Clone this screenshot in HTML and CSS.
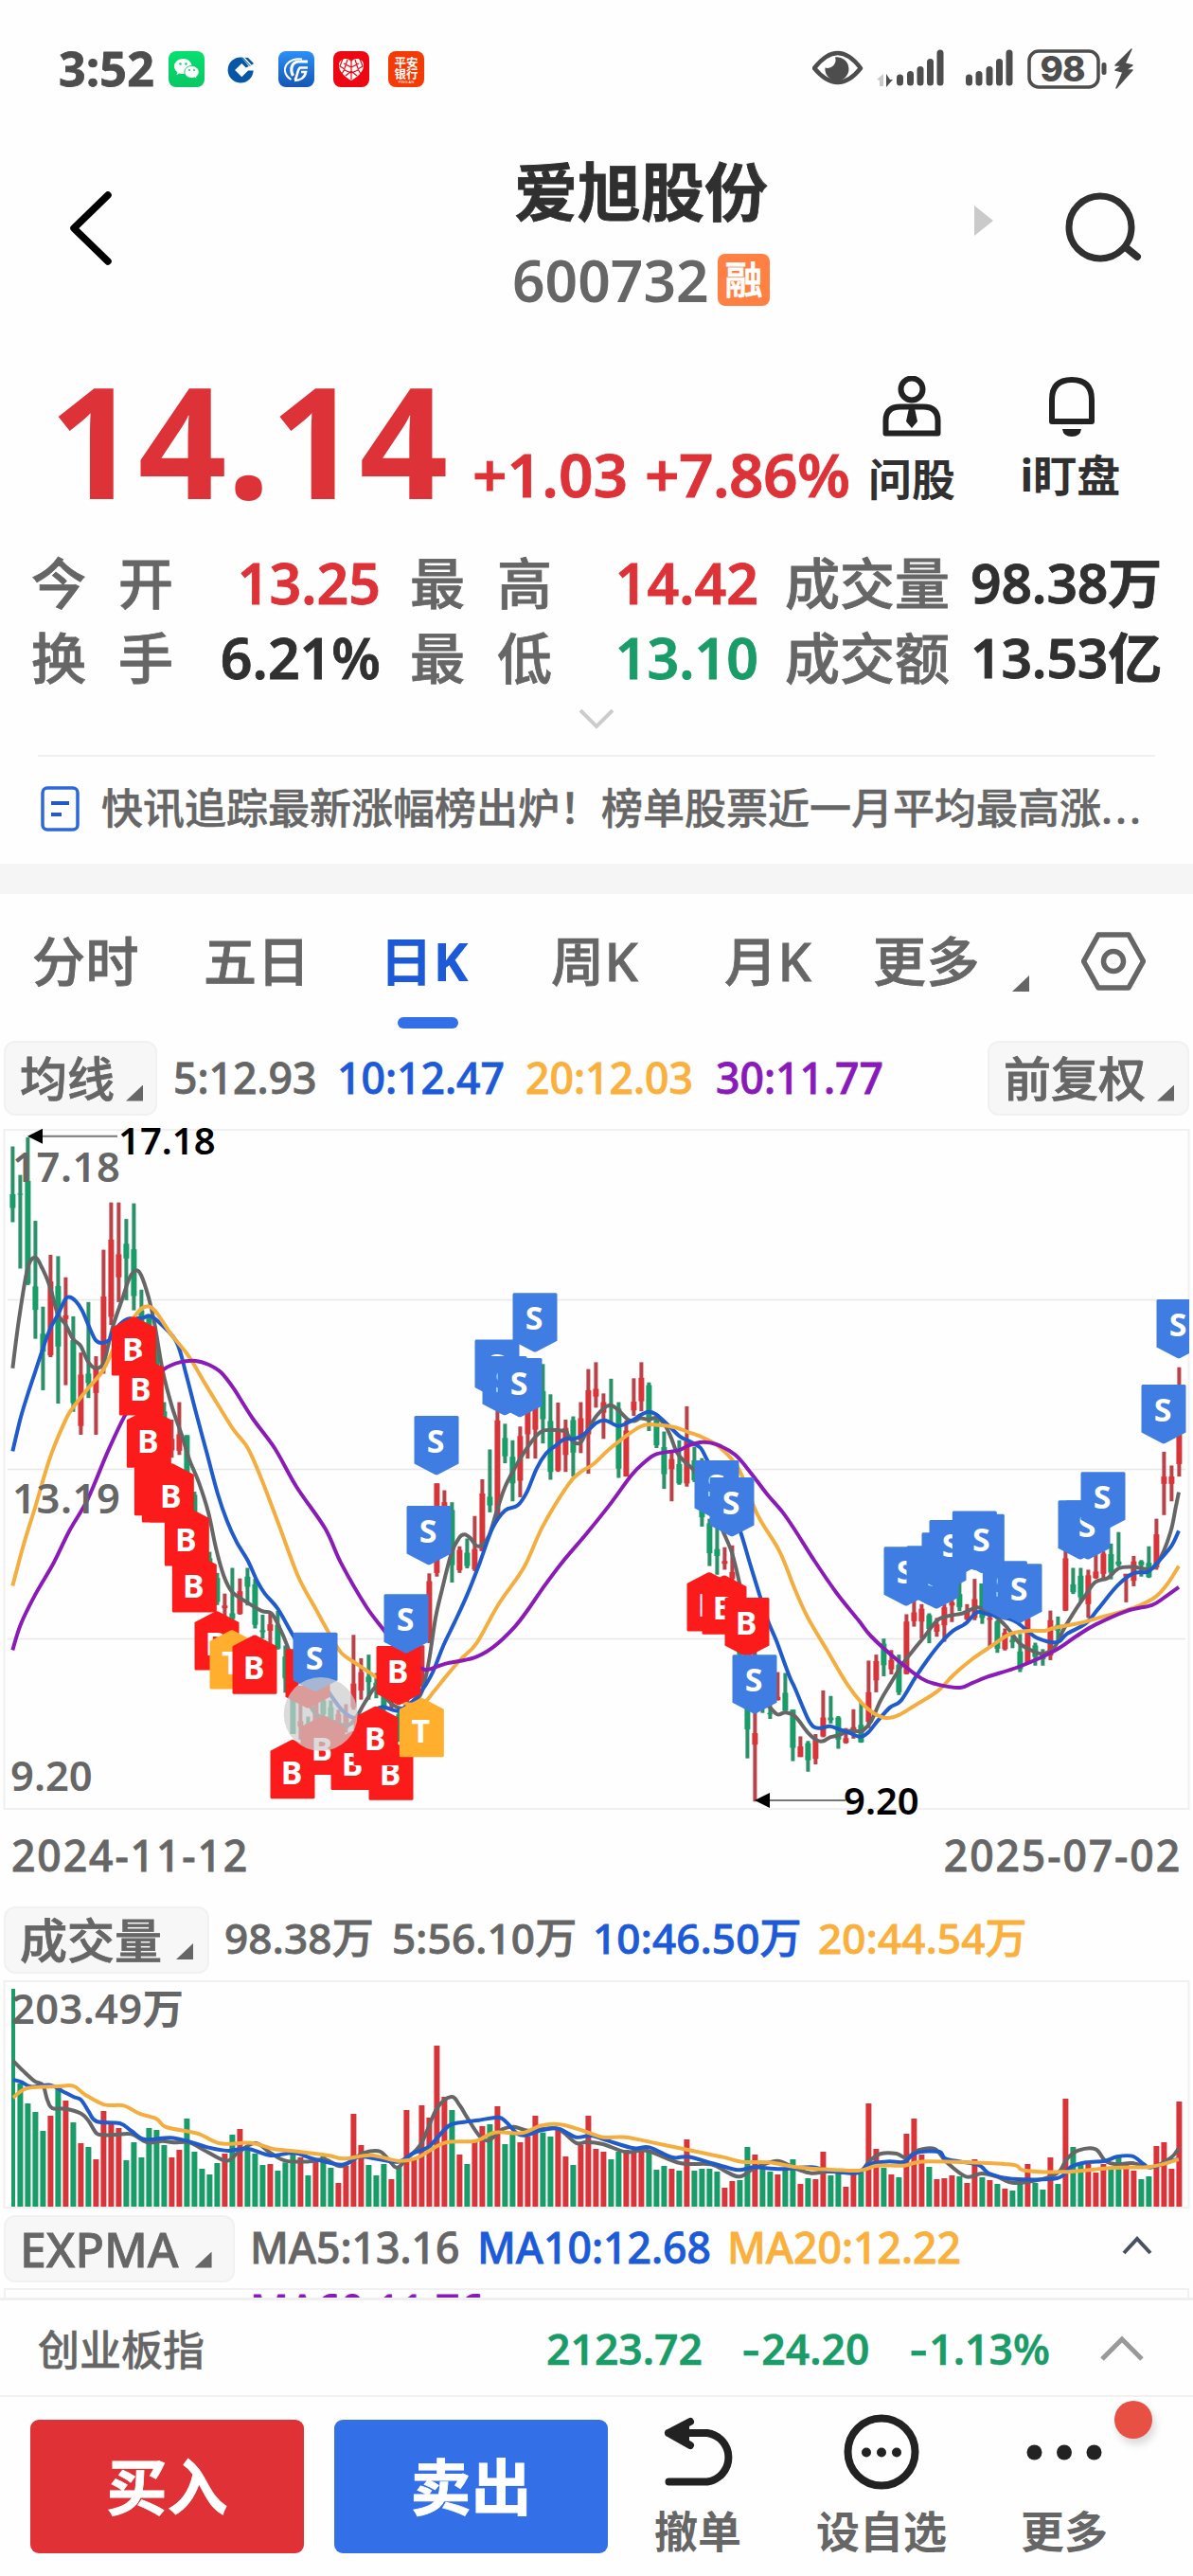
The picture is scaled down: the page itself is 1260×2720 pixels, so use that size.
FILE: index.html
```html
<!DOCTYPE html>
<html lang="zh-CN">
<head>
<meta charset="utf-8">
<title>爱旭股份 600732</title>
<link rel="stylesheet" href="styles.css">
</head>
<body>
<div class="phone">
  <div class="status">
    <span class="clock">3:52</span>
    <div class="apps">
      <svg viewBox="0 0 38 38"><defs><linearGradient id="wx" x1="0" y1="0" x2="0" y2="1"><stop offset="0" stop-color="#06e071"/><stop offset="1" stop-color="#0ac763"/></linearGradient></defs><rect width="38" height="38" rx="8" fill="url(#wx)"/><path d="M15.500 8c-5 0-9.500 3.400-9.500 8 0 2.600 1.300 4.700 3.400 6.200l-.9 2.800 3.300-1.600c1.200.4 2.500.5 3.700.5 5 0 9-3.400 9-7.900s-4-8-9-8z" fill="#fff"/><path d="M24.500 15.500c-4.200 0-7.600 2.900-7.600 6.500s3.400 6.500 7.600 6.500c1 0 2-.2 2.900-.5l2.800 1.500-.8-2.400c1.700-1.200 2.800-3 2.800-5.100 0-3.600-3.500-6.500-7.700-6.500z" fill="#fff" stroke="#0acf67"/><g fill="#0ccc66"><circle cx="12.500" cy="13.500" r="1.200"/><circle cx="18.500" cy="13.500" r="1.200"/><circle cx="22" cy="20" r="1"/><circle cx="27" cy="20" r="1"/></g></svg>
      <svg viewBox="0 0 38 38"><path d="M19 6.500a13.500 13.500 0 1 0 12.600 14h-5.500l-6.800 6.800-7.200-7.200 7.200-7.200 4.500 4.500 3-1.500z" fill="#0757a6"/><path d="M19 6.500l9 9.500 4-3-6-6z" fill="#0757a6"/><path d="M20 5l10 11" stroke="#fff" stroke-width="1.300"/></svg>
      <svg viewBox="0 0 38 38"><defs><linearGradient id="gf" x1="0" y1="0" x2="0" y2="1"><stop offset="0" stop-color="#2d8ff8"/><stop offset="1" stop-color="#1557b4"/></linearGradient></defs><rect width="38" height="38" rx="8" fill="url(#gf)"/><g fill="none" stroke="#fff"><path d="M25 8.500C14 6.500 6 14 7 21c.5 4 3 7 6.500 9" stroke-width="2"/><path d="M31 11H21c-7 1-9 8-5.500 15" stroke-width="3.200"/><path d="M31 17.500h-8c-3 1-2 7-5.500 13M17 31c6 0 11-3 12-9h-5" stroke-width="2.600"/></g></svg>
      <svg viewBox="0 0 38 38"><rect width="38" height="38" rx="8" fill="#ec0712"/><path d="M19 31C12 27 5.500 21.500 6 14c.5-6 9-8.500 13-3 4-5.500 12.500-3 13 3 .5 7.500-6 13-13 17z" fill="#fff"/><path d="M19 10v20M10 8l-3 8 5 3-3 5M28 8l3 8-5 3 3 5M11 13l8 4 8-4M12 20l7 3 7-3M15 9l-3 9M23 9l3 9M13 26l6-5 6 5" stroke="#ec0712" stroke-width="1.200" fill="none"/></svg>
      <svg viewBox="0 0 38 38"><rect width="38" height="38" rx="8" fill="#f43a05"/><text class="pab" x="19" y="17">平安</text><text class="pab" x="19" y="29">银行</text><text class="pab-en" x="19" y="34">PING AN</text></svg>
    </div>
    <div class="signals">
      <svg width="362" height="46" viewBox="0 0 362 46"><path d="M3 24Q28-8 52 24Q28 54 3 24Z" fill="none" stroke="#4d4d4d" stroke-width="4.500" transform="translate(-1 -2)" stroke-linejoin="round"/><path d="M24 10.500a8.500 8.500 0 0 1-10.500 11 12.500 12.500 0 1 0 10.500-11z" fill="#4d4d4d"/><path d="M68 34l7-6v13h-4v-6z" fill="#c9c9c9"/><path d="M78 28l4 6h3l-7 8z" fill="#4d4d4d"/><g stroke="#4d4d4d" stroke-width="7" stroke-linecap="round"><path d="M92.500 32v5M103.500 28.500v8.500M114 23.500v13.500M124.500 15.500v21.500M135 6v31M165.500 32v5M176 28.500v8.500M187 23.500v13.500M197.500 15.500v21.500M208 6v31"/></g><rect x="229" y="4" width="73" height="38" rx="10" fill="none" stroke="#4d4d4d" stroke-width="3.500"/><text class="battery" x="264" y="36">98</text><rect x="305.500" y="16" width="5" height="13" rx="2.500" fill="#4d4d4d"/><path d="M337 2l-17 17h7l-7 5 8 2-7 17 17-19h-7l7-5-8-2z" fill="#4d4d4d" stroke="#4d4d4d" stroke-width="1.500" stroke-linejoin="round"/></svg>
    </div>
  </div>

  <header class="header">
    <svg class="back" width="52" height="84" viewBox="0 0 52 84"><path d="M44 7L8 42l36 35" fill="none" stroke="#000" stroke-width="7.500" stroke-linecap="round" stroke-linejoin="round"/></svg>
    <div class="stock"><h1>爱旭股份</h1><div class="code"><span>600732</span><b>融</b></div></div>
    <svg class="next" width="20" height="32" viewBox="0 0 20 32"><path d="M0 0l20 16L0 32z" fill="#cacaca"/></svg>
    <svg class="search" width="84" height="80" viewBox="0 0 84 80"><circle cx="37" cy="39" r="33" fill="none" stroke="#303030" stroke-width="7"/><path d="M65 61l11 9" stroke="#303030" stroke-width="8" stroke-linecap="round"/></svg>
  </header>

  <section class="quote">
    <div class="prices"><strong>14.14</strong><span class="chg">+1.03</span><span class="pct">+7.86%</span></div>
    <div class="quick q1"><svg width="64" height="64" viewBox="0 0 64 64"><g fill="none" stroke="#222" stroke-width="6"><circle cx="32" cy="14" r="11.500"/><path d="M4.500 60.500V47Q4.500 32.500 20 32.500h24Q59.500 32.500 59.500 47V60.500z" stroke-linejoin="round"/></g><path d="M29 34h6l3 14-6 7-6-7z" fill="#222"/></svg><span>问股</span></div>
    <div class="quick q2"><svg width="64" height="64" viewBox="0 0 64 64"><path d="M11 48V25Q11 4 32 4t21 21v23z" fill="none" stroke="#222" stroke-width="6" stroke-linejoin="round"/><path d="M22 56h20q-1 8-10 8t-10-8z" fill="#222"/></svg><span>i盯盘</span></div>
  </section>

  <section class="stats">
    <span class="k"><i>今</i><i>开</i></span><span class="v red">13.25</span><span class="k"><i>最</i><i>高</i></span><span class="v red">14.42</span><span class="k full">成交量</span><span class="v amt">98.38万</span>
    <span class="k"><i>换</i><i>手</i></span><span class="v">6.21%</span><span class="k"><i>最</i><i>低</i></span><span class="v green">13.10</span><span class="k full">成交额</span><span class="v amt">13.53亿</span>
  </section>
  <div class="expand"><svg width="38" height="22" viewBox="0 0 38 22"><path d="M2 1l17 17L36 1" fill="none" stroke="#ccc" stroke-width="4"/></svg></div>
  <div class="news"><svg width="42" height="48" viewBox="0 0 42 48"><rect x="2" y="2" width="37" height="44" rx="5" fill="none" stroke="#2c68d8" stroke-width="3.500"/><path d="M11 18h19M11 30h11" stroke="#2459c6" stroke-width="4"/></svg><p>快讯追踪最新涨幅榜出炉！榜单股票近一月平均最高涨<i>...</i></p></div>
  <div class="band"></div>

  <nav class="tabs"><a>分时</a><a>五日</a><a class="on">日K</a><a>周K</a><a>月K</a><a class="more">更多</a><i class="tri"></i>
    <svg width="68" height="62" viewBox="0 0 68 62"><path d="M18 3h32l15.500 28L50 59H18L2.500 31z" fill="none" stroke="#666" stroke-width="5.500" stroke-linejoin="round"/><circle cx="34" cy="31" r="10.500" fill="none" stroke="#666" stroke-width="5.500"/></svg></nav>

  <div class="legend ma"><span class="chip">均线<i class="tri"></i></span><span class="gray a1">5:12.93</span><span class="blue a2">10:12.47</span><span class="orange a3">20:12.03</span><span class="purple a4">30:11.77</span><span class="chip right">前复权<i class="tri"></i></span></div>
  <svg class="kchart" id="kchart" width="1260" height="734" viewBox="0 1186 1260 734"></svg>
  <div class="dates"><time>2024-11-12</time><time>2025-07-02</time></div>

  <div class="legend vol"><span class="chip">成交量<i class="tri"></i></span><span class="gray b1">98.38万</span><span class="gray b2">5:56.10万</span><span class="blue b3">10:46.50万</span><span class="orange b4">20:44.54万</span></div>
  <svg class="vchart" id="vchart" width="1260" height="248" viewBox="0 2087 1260 248"></svg>

  <div class="legend exp"><span class="chip">EXPMA<i class="tri"></i></span><span class="gray c1">MA5:13.16</span><span class="blue c2">MA10:12.68</span><span class="orange c3">MA20:12.22</span><svg width="32" height="20" viewBox="0 0 32 20"><path d="M2 18L16 3l14 15" fill="none" stroke="#4b5060" stroke-width="4"/></svg></div>
  <div class="peek"><span>MA60:11.76</span></div>

  <div class="index"><span class="name">创业板指</span><span class="i1">2123.72</span><span class="i2"><i>-</i>24.20</span><span class="i3"><i>-</i>1.13%</span><svg width="48" height="28" viewBox="0 0 48 28"><path d="M3 26L24 5l21 21" fill="none" stroke="#999" stroke-width="5"/></svg></div>

  <footer class="actions">
    <button class="buy">买入</button><button class="sell">卖出</button>
    <div class="act undo"><svg width="80" height="80" viewBox="0 0 80 80"><path d="M29 8L6 20l23 13M6 20h41a26 26 0 0 1 0 51.500H6.500" fill="none" stroke="#222" stroke-width="8" stroke-linecap="round" stroke-linejoin="round"/><path d="M8 20l20-10v20z" fill="#222"/></svg><span>撤单</span></div>
    <div class="act fav"><svg width="80" height="80" viewBox="0 0 80 80"><circle cx="40" cy="40" r="35.500" fill="none" stroke="#222" stroke-width="8"/><g fill="#222"><circle cx="24" cy="40.500" r="5"/><circle cx="40" cy="40.500" r="5"/><circle cx="56" cy="40.500" r="5"/></g></svg><span>设自选</span></div>
    <div class="act etc"><svg width="80" height="80" viewBox="0 0 80 80"><g fill="#222"><circle cx="8.500" cy="40.500" r="8"/><circle cx="40" cy="40.500" r="8"/><circle cx="71.500" cy="40.500" r="8"/></g></svg><span>更多</span><i class="dot"></i></div>
  </footer>
</div>
<script src="chart.js"></script>
</body>
</html>
```
FILE: styles.css
```css
* { box-sizing: border-box; }
body { margin: 0; background: #fefefe; }
body, button { font-family: "Noto Sans", "Noto Sans CJK SC", sans-serif; }
.phone { width: 1260px; height: 2720px; overflow: hidden; display: flex; flex-direction: column; color: #666; font-weight: 500; white-space: nowrap; -webkit-text-stroke: .8px currentColor; }
.phone > * { flex: none; }
svg { display: block; flex: none; }
svg text { -webkit-text-stroke: 0; }
i { font-style: normal; }
.red { color: #dd3237; } .green { color: #1a9c69; } .gray { color: #666; }
.blue { color: #1c5ad8; } .orange { color: #f9b03d; } .purple { color: #8a19b9; }

.status { height: 146px; display: flex; align-items: center; padding-left: 62px; }
.clock { width: 116px; font: 700 50px/60px "Noto Sans", sans-serif; color: #4d4d4d; letter-spacing: .3px; padding-bottom: 2px; }
.apps { display: flex; gap: 20px; }
.apps svg { width: 38px; height: 38px; }
.apps text { fill: #fff; text-anchor: middle; }
.pab { font: 700 12.5px "Noto Sans CJK SC", sans-serif; }
.pab-en { font: 400 4px "Noto Sans", sans-serif; }
.signals { margin-left: 410px; }
.battery { font: 800 37px "Inter", sans-serif; fill: #4d4d4d; text-anchor: middle; letter-spacing: -1px; }

.header { height: 204px; display: flex; }
.back { margin: 53px 0 0 70px; }
.stock { margin: 16px 0 0 422px; width: 280px; }
.stock h1 { margin: 0; font-size: 67px; line-height: 80px; font-weight: 700; color: #303030; margin-left: -1px; }
.code { display: flex; align-items: center; height: 80px; margin-top: 13px; font-size: 60.500px; line-height: 80px; }
.code span { width: 213px; margin-left: -3px; font-weight: 600; -webkit-text-stroke: 0; padding-top: 2px; }
.code b { width: 55px; height: 55px; margin-left: 4px; border-radius: 8px; background: #ff8042; color: #fff; font-size: 40px; line-height: 53px; text-align: center; font-weight: 500; }
.next { margin: 71px 0 0 205px; }
.search { margin: 55px 0 0 76px; }

.quote { height: 224px; display: flex; color: #dd3237; }
.prices { display: flex; align-items: baseline; padding-top: 44px; width: 913px; height: 182px; }
.prices strong { font-size: 164px; line-height: 140px; width: 447px; margin-left: 52px; font-weight: 700; -webkit-text-stroke: 0; }
.prices span { font-size: 64px; line-height: 80px; font-weight: 600; position: relative; top: -2px; }
.chg { width: 182px; }
.pct { letter-spacing: -.6px; }
.quick { padding-top: 47px; text-align: center; color: #303030; font-size: 46px; font-weight: 700; line-height: 60px; -webkit-text-stroke: 0; }
.quick svg { margin: 0 auto 14px; }
.q1 { width: 100px; }
.q2 { width: 120px; margin-left: 59px; }
.q2 svg { margin-bottom: 10px; }
.q2 span { margin-left: -3px; }

.stats { height: 158px; display: grid; grid-template-columns: 181px 188px 181px 217px 209px 218px; grid-auto-rows: 79px; padding: 2px 0 0 33px; font-size: 59px; line-height: 79px; }
.stats .k { display: flex; justify-content: space-between; font-size: 58px; width: 150px; }
.stats .k:nth-child(6n+3) { margin-left: 31px; }
.stats .k:nth-child(6n+5) { margin-left: 29px; }
.stats .v { text-align: right; font-weight: 600; }
.stats .v:not(.red):not(.green) { color: #303030; }
.stats .v:nth-child(6n+4) { padding-right: 0; margin-right: 0; position: relative; left: 1px; }
.stats .amt { font-size: 57px; letter-spacing: -.2px; }

.expand { height: 65px; padding: 17px 0 0 611px; }
.news { height: 115px; margin: 0 40px; border-top: 2px solid #f0f0f0; display: flex; align-items: center; padding-bottom: 5px; }
.news svg { margin: 2px 0 0 3px; }
.news p { margin: 0 0 0 22px; font-size: 44px; line-height: 60px; -webkit-text-stroke: .5px currentColor; }
.news i { letter-spacing: 3px; }
.band { height: 32px; background: #f5f5f5; }

.tabs { height: 146px; display: flex; padding: 34px 0 0 34px; font-size: 56px; line-height: 72px; }
.tabs a { width: 181px; height: 108px; letter-spacing: .4px; }
.tabs a:nth-child(3) { width: 181px; margin-left: 5px; }
.tabs a:nth-child(4) { width: 183px; }
.tabs a:nth-child(5) { width: 157px; }
.tabs .on { color: #1c5ad8; font-weight: 700; -webkit-text-stroke: 0; }
.on::after { content: ""; display: block; width: 64px; height: 12px; margin: 24px 0 0 19px; border-radius: 6px; background: #336fe6; }
.tabs .more { width: 147px; }
.tabs svg { margin: 6px 0 0 55px; }
.tri { display: block; flex: none; width: 18px; height: 17px; background: #666; clip-path: polygon(100% 0, 100% 100%, 0 100%); }
.tabs .tri { margin: 52px 0 0 0; }

.legend { display: flex; align-items: center; padding-left: 4px; font-size: 44.500px; line-height: 60px; }
.chip { display: flex; height: 71px; border: 2px solid #f1f1f1; border-radius: 12px; background: #f7f7f7; font-size: 50px; line-height: 68px; padding-left: 15px; flex: none; }
.chip .tri { margin: 37px 0 0 15px; }
.ma { height: 96px; }
.ma .chip { height: 79px; width: 162px; line-height: 76px; }
.ma .chip .tri { margin: 45px 0 0 12px; }
.ma .chip.right { width: 213px; }
.a1 { margin-left: 17px; width: 173px; } .a2 { width: 199px; } .a3 { width: 201px; } .a4 { width: 287px; }
.vol .chip { width: 217px; } .vol { height: 77px; }
.b1 { margin-left: 16px; width: 177px; } .b2 { width: 212px; } .b3 { width: 238px; }
.vol > span:not(.chip) { font-size: 44px; letter-spacing: .2px; padding-bottom: 5px; }
.exp { height: 81px; padding-bottom: 3px; }
.exp > span:not(.chip) { padding-bottom: 2px; }
.exp .chip { width: 244px; }
.exp .chip .tri { margin-left: 17px; }
.exp > svg { margin-left: 163px; margin-top: -6px; }
.c1 { margin-left: 16px; width: 240px; } .c2 { width: 264px; } .c3 { width: 254px; }
.dates { height: 90px; display: flex; justify-content: space-between; padding: 9px 12px 0 12px; font-size: 44.500px; line-height: 60px; letter-spacing: 1.900px; }

.peek { height: 10px; margin: 0 4px; border: 2px solid #f1f1f1; border-bottom: 0; overflow: hidden; color: #8a19b9; font-size: 44.500px; }
.peek span { display: block; line-height: 60px; padding-left: 258px; margin-top: -9px; }

.index { height: 103px; border-top: 3px solid #f0f0f0; display: flex; align-items: center; padding-left: 40px; color: #1a9c69; font-size: 44.500px; font-weight: 600; -webkit-text-stroke: .4px currentColor; }
.index .name { width: 537px; color: #666; font-size: 44px; font-weight: 500; }
.index i { display: inline-block; transform: scaleX(1.3); transform-origin: left; margin-right: 6px; }
.i1 { width: 207px; } .i2 { width: 177px; } .i3 { width: 200px; }

.actions { height: 191px; border-top: 2px solid #f1f1f1; display: flex; padding-left: 32px; }
.actions button { width: 289px; height: 141px; margin: 24px 32px 0 0; border: 0; border-radius: 9px; color: #fff; font-size: 64px; font-weight: 700; padding: 0 0 6px; }
.buy { background: #df3136; } .sell { background: #336fe6; }
.actions .sell { margin-right: 0; }
.act { position: relative; padding-top: 18px; width: 140px; font-size: 46px; font-weight: 700; line-height: 60px; text-align: center; -webkit-text-stroke: 0; }
.act svg { margin: 0 auto 13px; }
.undo { margin-left: 25px; } .fav { margin-left: 54px; } .etc { margin-left: 53px; }
.undo svg { margin-left: 33px; }
.dot { position: absolute; left: 123px; top: 4px; width: 40px; height: 40px; border-radius: 50%; background: #e75042; box-shadow: 3px 6px 8px rgba(0,0,0,.15); }

.axis { font: 600 43.500px "Noto Sans", "Noto Sans CJK SC", sans-serif; fill: #666; }
.peak { font: 600 40px "Noto Sans", sans-serif; fill: #000; }
.tag { font: 700 34px "Noto Sans", sans-serif; fill: #fff; text-anchor: middle; }
```
FILE: chart.js
```js
// Daily candles: colour, high, body top, body bottom, low (plot units, 2.063 per pixel)
const candles = `G63,167,197,228 G125,166,168,329 G43,138,362,365 G225,368,419,482 G412,471,510,594 R299,357,518,522 G302,367,499,623 R348,431,439,583 G433,485,622,641 R512,560,672,691
G402,558,578,611 R520,545,600,691 R288,390,540,558 R185,266,434,452 R185,298,348,402 G221,275,307,398 G187,287,389,420 G375,420,500,510 G430,435,560,570 G480,500,600,620
G620,640,690,700 R658,700,725,741 R620,690,726,735 G692,692,800,810 G815,822,870,880 G880,890,930,940 G946,960,985,990 G992,1003,1055,1062 R1037,1063,1069,1095 G981,1080,1092,1100
R1004,1032,1081,1083 G981,1000,1022,1063 G1005,1017,1105,1113 G1083,1117,1121,1135 R1078,1104,1118,1155 G1075,1105,1157,1159 G1150,1174,1222,1253 G1240,1240,1343,1343 R1255,1315,1327,1355 G1305,1320,1350,1360
R1268,1275,1330,1340 G1265,1270,1300,1330 G1270,1285,1310,1320 R1290,1300,1320,1330 R1278,1300,1330,1340 R1127,1233,1285,1290 R1178,1208,1248,1268 G1170,1218,1230,1268 G1210,1231,1240,1265 G1240,1245,1290,1300
R1230,1240,1270,1290 G1295,1300,1350,1360 R1240,1250,1290,1300 R1180,1200,1250,1260 R1150,1150,1230,1240 R993,1010,1137,1145 R797,797,992,1000 R812,838,890,900 G838,855,975,1013 R934,942,986,992
G917,948,977,982 R868,940,984,988 R788,819,944,945 G723,826,845,860 R620,660,870,873 G667,698,738,753 G703,739,797,836 R673,694,791,827 R640,640,690,743 R630,630,680,743
G537,596,657,710 G603,661,772,789 R621,684,769,772 R658,676,735,772 G651,659,730,782 R620,655,703,731 R548,594,690,776 R533,591,608,632 R601,620,643,700 G569,628,632,665
G620,634,765,785 R660,682,782,782 R568,619,638,650 R533,567,618,640 G577,583,655,683 G655,657,714,720 G684,718,777,809 R725,744,766,836 G703,755,797,800 R629,705,797,804
G717,747,790,794 G742,780,871,891 G874,884,949,977 G893,940,955,996 R936,966,972,985 R932,990,1005,1040 G1040,1060,1170,1180 G1160,1260,1333,1396 R1160,1341,1366,1490 G1270,1280,1285,1297
G1270,1297,1300,1310 R1208,1262,1269,1270 G1210,1253,1292,1293 G1290,1290,1373,1402 R1348,1370,1393,1393 G1358,1363,1400,1425 R1343,1356,1397,1409 R1248,1307,1348,1350 G1260,1307,1313,1320 G1304,1307,1355,1375
R1330,1352,1362,1364 R1289,1328,1335,1353 G1275,1323,1361,1362 R1183,1252,1316,1330 R1170,1184,1226,1252 G1135,1146,1193,1217 R1160,1182,1202,1213 G1170,1192,1252,1258 R1082,1098,1212,1213 R1050,1078,1097,1109
R1060,1070,1098,1135 G1080,1084,1114,1145 R1090,1104,1120,1131 R1060,1067,1106,1142 R1050,1056,1063,1099 G1010,1038,1067,1075 R1060,1075,1093,1095 R1005,1049,1090,1095 G1015,1015,1090,1103 R1083,1090,1094,1152
G1095,1098,1157,1166 R1113,1122,1158,1161 G1120,1138,1143,1156 G1125,1163,1202,1208 R1090,1090,1188,1190 G1144,1150,1175,1194 G1158,1168,1180,1194 R1074,1095,1172,1182 G1087,1105,1118,1140 R940,960,1074,1075
G981,1017,1034,1038 G981,998,1045,1055 R985,997,1060,1090 R950,989,1003,1005 R945,950,994,1007 G928,951,991,1006 G903,967,974,978 R994,994,1000,1056 R955,967,1009,1021 G964,967,975,1000
G934,970,1001,1003 R874,908,980,985 R728,782,798,866 R758,782,798,836 R544,690,755,782`.split(/\s+/).map(s => [s[0], ...s.slice(1).split(',').map(Number)]);

// Volume bar tops
const volumes = [510,810,873,900,960,912,825,864,933,999,1011,1050,897,935,951,1053,996,1044,951,957,1005,1044,1020,921,1026,1080,1098,1062,1032,972,954,1015,1032,1068,1065,1086,1060,1030,1044,1101,1050,1041,1077,1125,1070,906,1005,1068,1101,1065,1113,1075,894,1045,879,918,690,852,894,1035,1065,995,945,939,882,1002,970,996,978,912,965,978,957,1041,1068,1005,912,1017,1026,1050,1026,1020,1025,1025,1025,1083,1071,1080,1086,987,1086,1080,1080,1089,1140,1119,1116,1011,1035,1075,1089,1098,1085,1050,1128,1110,1113,1026,1101,1095,1137,1095,1090,873,1017,1077,1098,1107,969,921,1035,1074,1113,1110,1101,1104,1125,1050,1107,1116,1128,1143,1149,1115,1065,1125,1146,1044,1128,858,1011,1065,1065,1092,1065,1080,1045,1065,1086,1113,1104,1008,996,1080,867];

const maLines = {
'#666': '40,546 60,440 87,330 111,305 135,330 159,370 183,428 207,450 231,482 255,497 279,532 303,546 327,536 345,490 360,450 390,390 410,350 430,333 447,343 470,390 490,450 515,550 545,630 575,690 600,745 630,795 660,860 685,940 710,1000 735,1033 780,1055 830,1075 860,1080 885,1110 910,1150 935,1200 990,1290 1040,1310 1095,1325 1125,1310 1160,1270 1195,1240 1230,1270 1260,1285 1290,1285 1330,1260 1345,1230 1360,1180 1380,1090 1400,1030 1430,950 1455,915 1472,908 1490,916 1510,933 1530,930 1550,910 1575,855 1600,805 1630,765 1660,730 1700,693 1730,681 1790,683 1800,692 1820,708 1840,708 1855,690 1890,650 1930,627 1960,638 1990,658 2010,661 2030,655 2055,658 2080,654 2105,668 2125,695 2145,730 2170,750 2200,770 2230,810 2260,850 2290,900 2320,950 2345,1020 2370,1100 2400,1200 2420,1270 2440,1285 2460,1299 2470,1300 2490,1296 2520,1305 2560,1340 2590,1357 2610,1358 2630,1350 2660,1345 2690,1336 2720,1337 2735,1335 2760,1315 2790,1270 2820,1235 2860,1190 2900,1155 2930,1130 2970,1095 3010,1085 3050,1080 3095,1067 3130,1075 3160,1090 3190,1110 3230,1145 3260,1158 3300,1168 3340,1155 3370,1115 3410,1070 3440,1040 3470,1012 3510,1003 3545,982 3590,979 3650,983 3680,955 3710,900 3725,850 3735,816',
'#1f5bcb': '40,727 65,655 87,605 111,555 135,505 159,460 183,430 207,396 220,391 240,400 260,420 285,460 303,485 320,491 345,485 360,465 400,440 450,437 475,432 510,450 560,490 590,560 620,640 655,730 690,820 720,880 750,925 785,965 815,1010 840,1038 880,1070 930,1130 985,1190 1050,1260 1090,1295 1125,1308 1160,1300 1210,1284 1260,1292 1310,1270 1340,1245 1370,1210 1405,1150 1440,1100 1480,1040 1520,970 1560,895 1600,856 1640,845 1670,815 1700,765 1730,732 1760,715 1790,700 1820,700 1850,690 1890,665 1920,660 1960,672 2000,661 2030,648 2055,641 2080,647 2120,672 2155,695 2190,707 2220,720 2240,745 2300,820 2345,900 2380,980 2430,1090 2460,1140 2500,1215 2520,1245 2560,1310 2580,1328 2600,1330 2630,1326 2660,1333 2690,1340 2725,1349 2750,1340 2780,1315 2820,1285 2855,1270 2900,1220 2940,1180 2980,1145 3020,1118 3060,1102 3095,1078 3130,1082 3210,1095 3250,1115 3290,1135 3350,1143 3380,1125 3440,1102 3480,1070 3540,1020 3590,993 3635,990 3660,975 3710,935 3735,900',
'#f3ae3f': '40,1020 75,930 111,850 159,740 207,660 231,632 279,590 327,550 370,490 430,430 460,412 490,420 540,470 600,522 650,580 690,625 740,680 785,720 830,790 885,890 945,1000 1000,1070 1040,1120 1080,1165 1130,1190 1195,1220 1240,1240 1280,1275 1340,1275 1375,1250 1410,1220 1460,1180 1510,1145 1580,1060 1660,980 1720,890 1800,800 1840,772 1880,755 1940,717 2030,673 2090,670 2140,675 2180,685 2230,698 2280,718 2340,765 2400,865 2470,945 2520,1030 2560,1090 2620,1160 2680,1230 2730,1275 2770,1298 2810,1308 2850,1301 2900,1280 2970,1250 3020,1215 3080,1180 3140,1152 3200,1125 3260,1118 3310,1118 3340,1112 3430,1100 3480,1090 3560,1075 3620,1060 3665,1042 3700,1015 3735,977',
'#8a1bb6': '40,1160 65,1105 111,1040 170,970 220,900 279,830 340,730 395,650 450,590 520,548 570,533 620,530 660,538 700,555 740,590 800,655 870,720 940,805 1030,895 1080,970 1160,1065 1220,1120 1280,1180 1335,1200 1360,1202 1410,1190 1500,1177 1560,1155 1630,1110 1680,1065 1720,1025 1780,970 1860,905 1930,845 2000,780 2040,752 2080,733 2150,725 2180,715 2225,707 2270,712 2330,735 2380,775 2430,820 2480,860 2520,900 2580,965 2650,1035 2720,1095 2760,1130 2840,1180 2920,1222 2970,1235 3040,1242 3080,1232 3130,1218 3230,1196 3340,1162 3410,1130 3470,1105 3570,1075 3650,1062 3690,1045 3735,1023'
};

const volLines = {
'#666': '34,738 60,770 90,803 111,815 122,860 135,888 170,890 210,905 230,930 250,968 270,973 300,972 340,970 380,996 420,992 450,997 490,997 530,1022 585,1055 615,1030 660,998 700,1030 740,1055 800,1057 840,1050 880,1072 910,1055 940,1030 985,1026 1025,1076 1050,1050 1090,1000 1130,890 1168,852 1190,880 1210,920 1240,975 1265,990 1300,955 1330,947 1370,960 1440,952 1490,998 1519,995 1560,1002 1620,1027 1675,1023 1760,1062 1840,1066 1880,1090 1914,1105 1950,1080 2010,1055 2060,1080 2100,1094 2150,1088 2220,1093 2250,1055 2280,1032 2320,1032 2345,1045 2380,1020 2420,1018 2450,1060 2500,1105 2540,1095 2580,1105 2623,1125 2700,1112 2740,1090 2760,1050 2790,1022 2835,1018 2860,1055 2890,1066 2930,1062 2980,1075 3030,1045 3050,1015',
'#1f5bcb': '34,798 55,805 80,820 130,815 160,833 190,852 210,862 230,900 250,930 310,936 340,960 375,987 440,982 490,994 540,1013 590,1023 640,1016 700,1038 760,1030 810,1048 885,1067 930,1042 980,1050 1030,1058 1070,1030 1110,1010 1160,945 1200,932 1240,926 1290,917 1310,932 1340,970 1365,973 1400,958 1445,953 1490,980 1530,975 1575,992 1640,1015 1680,1012 1740,1044 1780,1042 1850,1065 1910,1084 1950,1075 2020,1081 2100,1075 2150,1088 2220,1092 2250,1065 2300,1057 2340,1058 2370,1030 2430,1026 2450,1050 2530,1067 2560,1095 2620,1112 2735,1110 2770,1075 2810,1060 2860,1055 2890,1042 2930,1040 2960,1066 2980,1075 3050,1048',
'#f3ae3f': '34,855 70,825 150,819 190,818 220,845 270,877 320,880 360,905 405,922 430,948 510,968 570,1000 650,998 710,1018 770,1025 850,1038 890,1048 960,1037 1030,1055 1080,1045 1150,998 1230,992 1280,965 1350,967 1400,943 1450,940 1510,960 1560,980 1620,980 1700,1000 1780,1020 1870,1043 1920,1058 1990,1060 2060,1075 2110,1080 2220,1086 2270,1070 2340,1070 2400,1057 2610,1066 2650,1085 2750,1090 2880,1077 2980,1073 3050,1050'
};

// Trade tags: letter, pointer direction, centre x, top y
const tags = 'Bu424,433 Bu448,520 Bu472,634 Bu496,738 Bu520,753 Bu544,753 Bu592,848 Bu616,949 Bu687,1075 Tu735,1116 Bu807,1127 Bd975,1158 Sd999,1122 Bu927,1355 Bu1023,1303 Bu1119,1336 Bu1239,1358 Bu1191,1282 Bd1263,1151 Sd1287,1038 Tu1336,1264 Sd1359,846 Sd1383,650 Sd1575,484 Sd1599,520 Sd1647,524 Sd1695,382 Sd2271,747 Sd2319,784 Bu2247,990 Bu2295,997 Bd2367,1046 Sd2391,1170 Sd2871,935 Sd2943,933 Sd2967,941 Sd2991,904 Sd3015,877 Sd3088,857 Sd3112,864 Sd3184,966 Sd3231,972 Sd3423,834 Sd3447,834 Sd3495,772 Sd3687,582 Sd3735,396';

const px = v => +v.toFixed(2);
const Y = z => px(1180 + z / 2.063);
const fill = { R: '#d8353a', G: '#1a9c69' };
const wick = { R: '#bb4247', G: '#2b9169' };

function curve(points) {
  let d = `M${points[0]}`;
  for (let i = 0; i < points.length - 1; i++) {
    const p0 = points[i - 1] || points[i], p1 = points[i], p2 = points[i + 1], p3 = points[i + 2] || p2;
    d += `C${px(p1[0] + (p2[0] - p0[0]) / 6)},${px(p1[1] + (p2[1] - p0[1]) / 6)} ${px(p2[0] - (p3[0] - p1[0]) / 6)},${px(p2[1] - (p3[1] - p1[1]) / 6)} ${p2}`;
  }
  return d;
}
const lines = (set, mx, my) => Object.entries(set).map(([c, s]) => {
  const pts = s.split(' ').map(p => p.split(',').map(Number)).map(([x, y]) => [px(mx(x)), px(my(y))]);
  return `<path d="${curve(pts)}" fill="none" stroke="${c}" stroke-width="4"/>`;
}).join('');
const rect = (x, y, w, h, f) => `<rect x="${px(x)}" y="${px(y)}" width="${w}" height="${px(Math.max(h, 1))}" fill="${f}"/>`;

let k = '<defs><clipPath id="plot"><rect x="4" y="1190" width="1252" height="722"/></clipPath></defs>';
k += '<rect x="4.500" y="1193" width="1251" height="717" fill="none" stroke="#f0f0f0" stroke-width="2"/>';
k += '<path d="M8 1372.500H1252M8 1551.500H1252M8 1730.500H1252" stroke="#e8e8e8" stroke-width="1.300"/>';
candles.forEach(([c, hi, top, bot, lo], i) => {
  const x = 13.4 + 8 * i;
  k += rect(x - 2, Y(hi), 4, Y(lo) - Y(hi), wick[c]) + rect(x - 3, Y(top), 6, Y(bot) - Y(top), fill[c]);
});
k += lines(maLines, x => x / 3, Y);
k += '<text class="axis" x="13" y="1248" textLength="114">17.18</text><text class="axis" x="13" y="1598" textLength="114">13.19</text><text class="axis" x="11" y="1891">9.20</text>';
k += '<path d="M43 1199.700H124M811 1901H893" stroke="#777" stroke-width="2"/><path d="M29 1199.700l16-8v16zM797 1901l16-8v16z"/>';
k += '<text class="peak" x="125" y="1219">17.18</text><text class="peak" x="891" y="1916">9.20</text>';
k += '<g clip-path="url(#plot)">';
tags.split(' ').forEach(t => {
  const [cx, top] = t.slice(2).split(',').map(Number), up = t[1] === 'u';
  const col = { B: '#fb1b1a', S: '#3f7de3', T: '#ffae2d' }[t[0]];
  const shape = up ? 'M-1.500 .5Q0 0 1.500 .5L23.500 12V61Q23.500 62.500 22 62.500H-22Q-23.500 62.500-23.500 61V12Z' : 'M-22 0H22Q23.500 0 23.500 1.500V50.500L1.500 62Q0 62.500-1.500 62L-23.500 50.500V1.500Q-23.500 0-22 0Z';
  k += `<g transform="translate(${px(cx / 3)} ${Y(top)})"><path d="${shape}" fill="${col}"/><text class="tag" x="-1" y="${up ? 47 : 39}">${t[0]}</text></g>`;
});
k += '</g><circle cx="338.700" cy="1810" r="39" fill="#cdcdcd" fill-opacity=".72"/>';
document.getElementById('kchart').innerHTML = k;

let v = '<rect x="4.500" y="2092" width="1251" height="239" fill="none" stroke="#f0f0f0" stroke-width="2"/>';
volumes.forEach((top, i) => {
  const h = (1200 - top) / 3, first = i === 0;
  v += rect(first ? 12 : 10.4 + 8 * i, 2330 - h, first ? 4 : 6, h, fill[candles[i][0]]);
});
v += lines(volLines, x => x / 2.45, y => 1930 + y / 3);
v += '<text class="axis" x="12" y="2137" textLength="182">203.49万</text>';
document.getElementById('vchart').innerHTML = v;
```
